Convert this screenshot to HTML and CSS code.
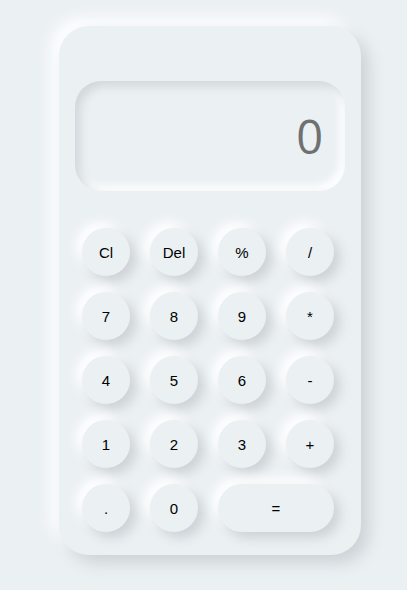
FILE: index.html
```html
<!DOCTYPE html>
<html>
<head>
<meta charset="utf-8">
<link rel="stylesheet" href="styles.css">
</head>
<body>
<div class="calc">
  <div class="display">0</div>
  <div class="keys">
    <button class="key">Cl</button>
    <button class="key">Del</button>
    <button class="key">%</button>
    <button class="key">/</button>
    <button class="key">7</button>
    <button class="key">8</button>
    <button class="key">9</button>
    <button class="key">*</button>
    <button class="key">4</button>
    <button class="key">5</button>
    <button class="key">6</button>
    <button class="key">-</button>
    <button class="key">1</button>
    <button class="key">2</button>
    <button class="key">3</button>
    <button class="key">+</button>
    <button class="key">.</button>
    <button class="key">0</button>
    <button class="key wide">=</button>
  </div>
</div>
</body>
</html>
```
FILE: styles.css
```css
html, body {
  margin: 0;
  padding: 0;
  background: #ebf0f3;
}
body {
  width: 407px;
  height: 590px;
  overflow: hidden;
}
.calc {
  margin: 26px 0 0 59px;
  width: 302px;
  height: 529px;
  box-sizing: border-box;
  padding: 55px 16px 0;
  border-radius: 30px;
  background: #ebf0f3;
  box-shadow: 8px 8px 16px #cdd2d6, -8px -8px 16px #ffffff;
}
.display {
  height: 110px;
  border-radius: 26px;
  box-sizing: border-box;
  padding: 0 22px 0 0;
  display: flex;
  align-items: center;
  justify-content: flex-end;
  font-family: "Open Sans", sans-serif;
  font-size: 47px;
  color: #707070;
  background: #ebf0f3;
  box-shadow: inset 5px 5px 10px #d2d7db, inset -5px -5px 10px #ffffff;
}
.keys {
  margin: 37px 0 0 7px;
  display: grid;
  grid-template-columns: repeat(4, 48px);
  grid-auto-rows: 48px;
  column-gap: 20px;
  row-gap: 16px;
  justify-content: start;
}
.key {
  border: none;
  padding: 0;
  border-radius: 24px;
  background: #ebf0f3;
  font-family: "Liberation Sans", Arial, sans-serif;
  font-size: 15px;
  color: #000;
  box-shadow: 6px 6px 12px #cdd2d6, -6px -6px 12px #ffffff;
}
.wide {
  grid-column: span 2;
}
```
